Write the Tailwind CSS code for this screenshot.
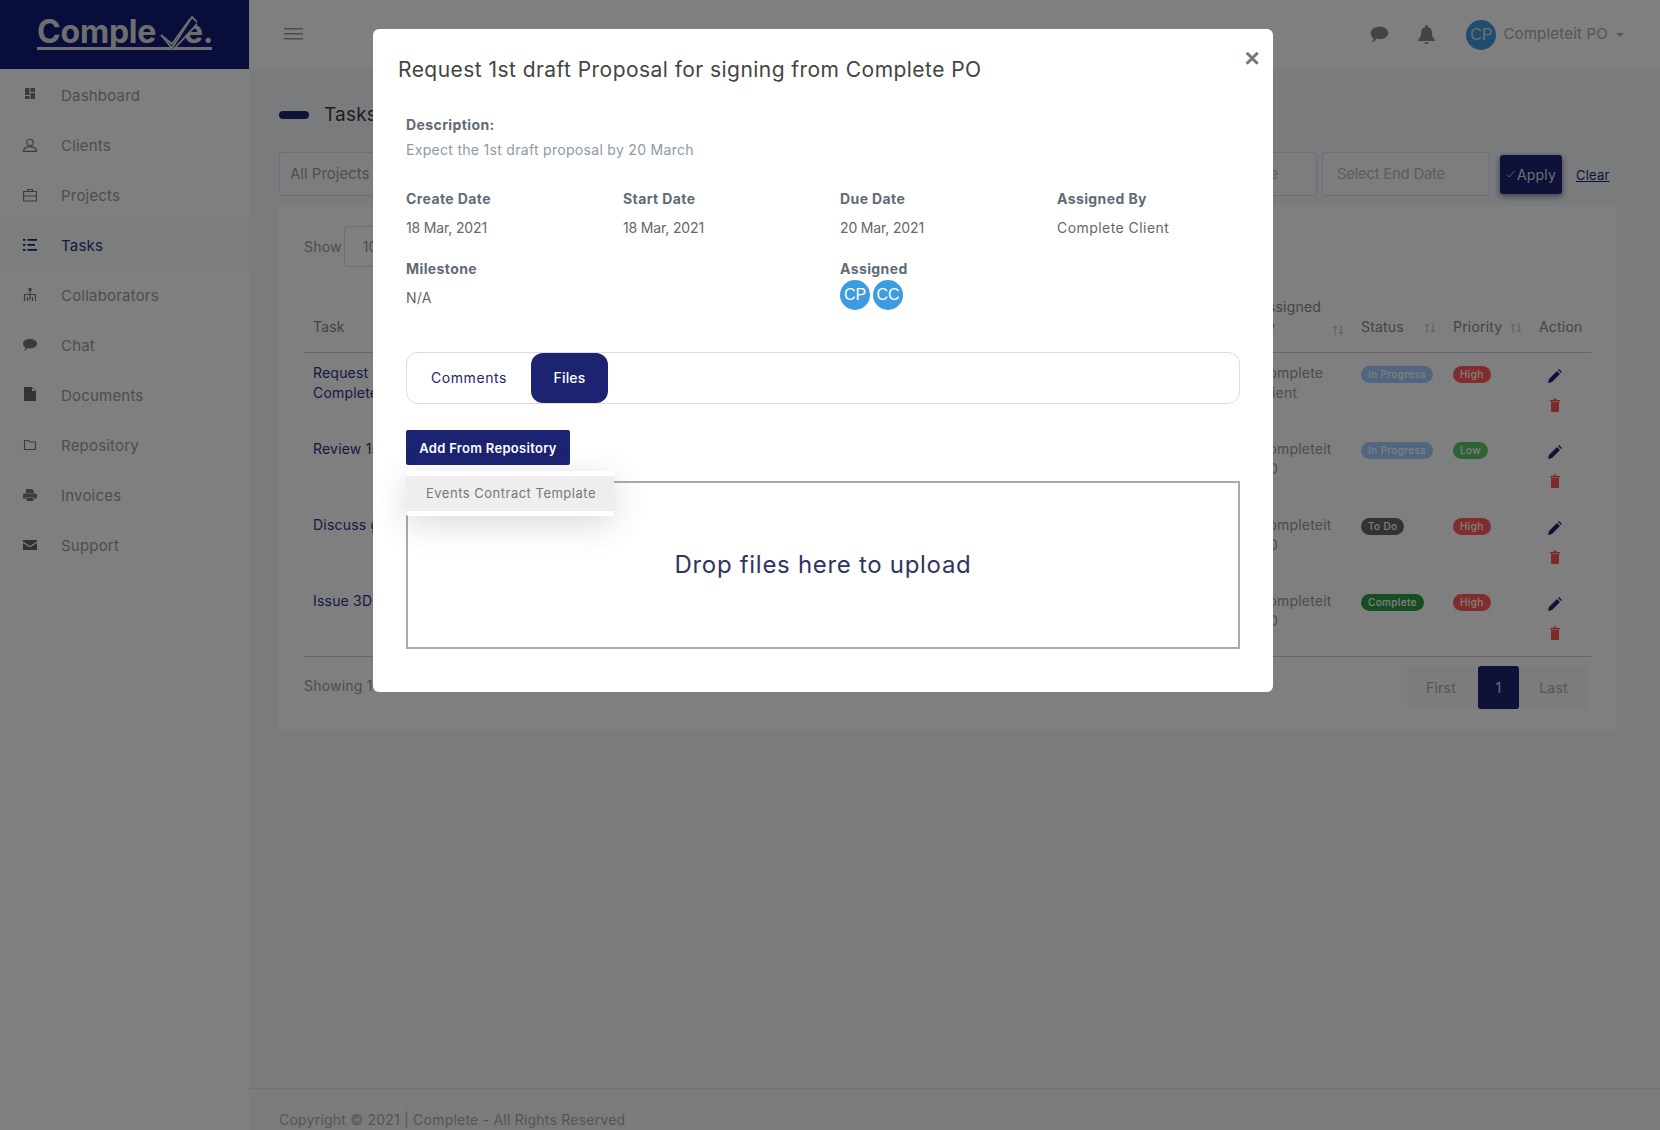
<!DOCTYPE html>
<html lang="en">
<head>
<meta charset="UTF-8">
<title>Tasks - Complete</title>
<script src="https://cdn.jsdelivr.net/npm/@tailwindcss/browser@4"></script>
</head>
<body class="font-['Inter',sans-serif] tracking-[0.2px] text-[14px] text-[#333] bg-[#f4f6f8] overflow-hidden">
<div class="flex h-[1130px] w-[1660px]">
  <!-- sidebar -->
  <aside class="w-[249px] shrink-0 bg-white">
    <div class="h-[69px] bg-[#111a78] flex items-center pl-[37px]">
      <div class="relative w-[175px] h-[33px] mt-[-3px] border-b-[3px] border-[#ddd] text-[#ddd] font-bold text-[32px] leading-[30px] tracking-[-0.2px] flex">
        <span>Comple</span>
        <span class="absolute left-[147px]">e.</span>
        <svg class="absolute left-[122px] top-[-3px] w-[38px] h-[38px]" viewBox="0 0 38 38" fill="#111a78" stroke="#ddd" stroke-width="1.8"><path d="M2 21l11 13L33 3l6 6-25 27"/><path d="M2 21l11 9L31 5" fill="none"/></svg>
      </div>
    </div>
    <nav class="text-[15px] text-[#9c9c9c] pt-[2px]">
      <a class="flex items-center h-[50px] pl-[23px] gap-[24px]"><svg class="w-[14px] h-[14px] mb-[4px]" viewBox="0 0 14 14" fill="#777"><path d="M2 1h4.500v7H2zM7.500 1H12v4H7.500zM7.500 6H12v6H7.500zM2 9h4.500v3H2z"/></svg>Dashboard</a>
      <a class="flex items-center h-[50px] pl-[23px] gap-[24px]"><svg class="w-[14px] h-[14px] mb-[2px]" viewBox="0 0 14 14" fill="none" stroke="#777" stroke-width="1.1"><circle cx="7" cy="4.500" r="3.200"/><path d="M.6 13.400c0-2.500 2-4 4-4.500h4.800c2 .5 4 2 4 4.500z"/></svg>Clients</a>
      <a class="flex items-center h-[50px] pl-[23px] gap-[24px]"><svg class="w-[14px] h-[14px] mb-[2px]" viewBox="0 0 14 14" fill="none" stroke="#777" stroke-width="1.1"><path d="M.6 3.500h12.800v9.500H.6zM4.500 3.500V1.500h5v2M.6 8h12.800M6 8h2"/></svg>Projects</a>
      <a class="flex items-center h-[50px] pl-[23px] gap-[24px] bg-[#f8fafa] text-[#2a3488]"><svg class="w-[14px] h-[14px] mb-[2px]" viewBox="0 0 14 14" fill="#1c2472"><path d="M0 1h2.500v1.800H0zM4.500 1H14v1.800H4.500zM0 6h2.500v1.800H0zM4.500 6H12v1.800H4.500zM0 11h2.500v1.800H0zM4.500 11H14v1.800H4.500z"/></svg>Tasks</a>
      <a class="flex items-center h-[50px] pl-[23px] gap-[24px]"><svg class="w-[14px] h-[14px] mb-[2px]" viewBox="0 0 14 14" fill="none" stroke="#777" stroke-width="1.2"><circle cx="7" cy="1.500" r="1.100" fill="#777"/><path d="M7 2v10M1.500 13V6.500h11V13M4.500 13V9M9.500 13V9"/></svg>Collaborators</a>
      <a class="flex items-center h-[50px] pl-[23px] gap-[24px]"><svg class="w-[14px] h-[14px] mb-[2px]" viewBox="0 0 14 14" fill="#777"><path d="M7 1c3.800 0 7 2 7 4.700s-3.200 4.700-7 4.700c-.8 0-1.500-.1-2.200-.3C3.800 11.300 2.500 12.500 1 13c.8-.8 1.400-2 1.500-3.500C1 8.600 0 7.300 0 5.700 0 3 3.200 1 7 1z"/></svg>Chat</a>
      <a class="flex items-center h-[50px] pl-[23px] gap-[24px]"><svg class="w-[14px] h-[14px] mb-[4px]" viewBox="0 0 14 14" fill="#666"><path d="M1 0h8l4 4v10H1zM9 .8V4h3.200z"/></svg>Documents</a>
      <a class="flex items-center h-[50px] pl-[23px] gap-[24px]"><svg class="w-[14px] h-[14px] mb-[3px]" viewBox="0 0 14 14" fill="none" stroke="#777" stroke-width="1.100"><path d="M1.500 2.500h4l1.500 1.500h5.500v7.500h-11z"/></svg>Repository</a>
      <a class="flex items-center h-[50px] pl-[23px] gap-[24px]"><svg class="w-[14px] h-[14px] mb-[2px]" viewBox="0 0 14 14" fill="#777"><path d="M3 1h6l2 2v2H3zM1.500 5.500h11c.8 0 1.500.7 1.500 1.500v3.500h-3V9H3v1.500H0V7c0-.8.700-1.500 1.500-1.500zM3.500 9.500h7V13h-7z"/></svg>Invoices</a>
      <a class="flex items-center h-[50px] pl-[23px] gap-[24px]"><svg class="w-[14px] h-[14px] mb-[3px]" viewBox="0 0 14 14" fill="#666"><path d="M0 2h14v1.500L7 8 0 3.500zM0 5l7 4.500L14 5v7H0z"/></svg>Support</a>
    </nav>
  </aside>

  <!-- main column -->
  <div class="flex-1 flex flex-col min-w-0">
    <header class="h-[69px] bg-white flex items-center pl-[35px] pr-[36px] shrink-0">
      <svg class="w-[19px] h-[14px] mb-[2px]" viewBox="0 0 19 14" fill="#999"><path d="M0 1h19v1.500H0zM0 6h19v1.500H0zM0 11h19v1.500H0z"/></svg>
      <div class="ml-auto flex items-center">
        <svg class="w-[19px] h-[18px]" viewBox="0 0 14 13" fill="#888"><path d="M7 .5c3.600 0 6.500 2 6.500 4.500S10.600 9.500 7 9.500c-.8 0-1.500-.1-2.200-.3C3.800 10.300 2.500 11.500 1 12c.8-.8 1.400-1.800 1.500-3C1.300 8 .5 6.500.5 5 .5 2.500 3.400.5 7 .5z"/></svg>
        <svg class="w-[17px] h-[19px] ml-[29px]" viewBox="0 0 14 16" fill="#888"><path d="M7 0c.6 0 1 .4 1 1v.6c2.300.4 3.500 2.300 3.500 4.500 0 3.500 1 4.700 2.500 6.400v1H0v-1c1.500-1.700 2.500-2.900 2.500-6.400C2.500 3.900 3.700 2 6 1.600V1c0-.6.400-1 1-1zM5 14.500h4c0 1-1 1.500-2 1.500s-2-.5-2-1.500z"/></svg>
        <div class="ml-[31px] w-[30px] h-[30px] rounded-full bg-[#3d9be0] text-[#ddd] flex items-center justify-center font-['Liberation_Sans',sans-serif] text-[16px] tracking-normal">CP</div>
        <span class="ml-[7px] text-[#aaa] text-[15px]">Completeit PO</span>
        <span class="ml-[8px] border-x-[4px] border-x-transparent border-t-[4px] border-t-[#aaa]"></span>
      </div>
    </header>

    <main class="flex-1 px-[30px]">
      <div class="flex items-center pt-[9px] h-[83px]">
        <span class="w-[30px] h-[8px] rounded-full bg-[#1c2472]"></span>
        <h1 class="ml-[15px] text-[19px] text-[#3c3c3c]">Tasks</h1>
      </div>
      <div class="flex items-center mr-[20px]">
        <div class="w-[400px] h-[44px] bg-[#fafbff] border border-[#dde] rounded-[3px] pl-[10px] flex items-center text-[15px] tracking-[0px] text-[#a0a0a0]">All Projects</div>
        <div class="ml-auto flex items-center">
          <div class="w-[168px] h-[44px] bg-[#fafbff] border border-[#dde] rounded-[3px] flex items-center justify-end pr-[38px] text-[15px] tracking-[-0.3px] text-[#bbb]">Select Start Date</div>
          <div class="ml-[5px] w-[168px] h-[44px] bg-[#fafbff] border border-[#dde] rounded-[3px] pl-[14px] flex items-center text-[15px] tracking-[-0.3px] text-[#bbb]">Select End Date</div>
          <button class="ml-[10px] w-[62px] h-[39px] bg-[#1c2472] text-[#ddd] rounded-[3px] text-[14px] flex items-center justify-center gap-[2px] shadow-[0_2px_6px_rgba(28,36,114,0.6)]"><svg class="w-[9px] h-[8px]" viewBox="0 0 9 8" fill="none" stroke="#bbb" stroke-width="1"><path d="M.5 4.500l2.500 2.500L8.500 1"/></svg>Apply</button>
          <a class="ml-[14px] w-[34px] text-[#1c2472] underline text-[13px] mt-[3px]">Clear</a>
        </div>
      </div>

      <section class="mt-[10px] bg-white rounded-[3px] h-[524px] pt-[20px] px-[25px] w-[1337px]">
        <div class="flex items-center text-[14px] text-[#999] h-[41px]">
          <span>Show</span>
          <div class="ml-[2px] w-[70px] h-[41px] border border-[#dde] rounded-[3px] flex items-center pl-[18px]">10</div>
        </div>
        <div class="grid grid-cols-[954px_103px_92px_86px_52px] h-[86px] border-b border-[#ccc] text-[14px] text-[#888] items-end pb-[15px]">
          <div class="pl-[9px]">Task</div>
          <div class="leading-[20px] relative">Assigned<br>By
            <svg class="absolute right-[17px] bottom-[1px] w-[12px] h-[12px]" viewBox="0 0 12 12" fill="none" stroke="#bbb" stroke-width="1"><path d="M3 11V2M1 4l2-2 2 2M9 1v9M7 8l2 2 2-2"/></svg>
          </div>
          <div class="flex items-center">Status<svg class="ml-[20px] mt-[3px] w-[12px] h-[12px]" viewBox="0 0 12 12" fill="none" stroke="#bbb" stroke-width="1"><path d="M3 11V2M1 4l2-2 2 2M9 1v9M7 8l2 2 2-2"/></svg></div>
          <div class="flex items-center">Priority<svg class="ml-[8px] mt-[3px] w-[12px] h-[12px]" viewBox="0 0 12 12" fill="none" stroke="#bbb" stroke-width="1"><path d="M3 11V2M1 4l2-2 2 2M9 1v9M7 8l2 2 2-2"/></svg></div>
          <div>Action</div>
        </div>

        <div class="grid grid-cols-[954px_103px_92px_86px_52px] h-[76px] pt-[10px] leading-[20px] text-[14px] text-[#999]">
          <div class="pl-[9px] text-[#2a3488]">Request 1st draft Proposal for signing from<br>Complete PO</div>
          <div>Complete<br>Client</div>
          <div><span class="inline-block h-[17px] leading-[17px] px-[7px] rounded-full bg-[#a0ceff] text-white text-[10px] font-medium tracking-[0.35px]">In Progress</span></div>
          <div><span class="inline-block h-[17px] leading-[17px] px-[7px] rounded-full bg-[#ff5a5a] text-white text-[10px] font-medium tracking-[0.35px]">High</span></div>
          <div class="pl-[9px] flex flex-col gap-[15px] pt-[6px]">
            <svg class="w-[14px] h-[14px]" viewBox="0 0 14 14" fill="#1c2472"><path d="M0 14l1-4 8-8 3 3-8 8zM10 1l1-1 3 3-1 1z"/></svg>
            <svg class="w-[10px] h-[14px] ml-[2px]" viewBox="0 0 10 14" fill="#f55"><path d="M0 2h10v1.500H0zM3.500 .5h3V2h-3zM1 4h8v9a1 1 0 0 1-1 1H2a1 1 0 0 1-1-1z"/></svg>
          </div>
        </div>
        <div class="grid grid-cols-[954px_103px_92px_86px_52px] h-[76px] pt-[10px] leading-[20px] text-[14px] text-[#999]">
          <div class="pl-[9px] text-[#2a3488]">Review 1st draft Proposal</div>
          <div>Completeit<br>PO</div>
          <div><span class="inline-block h-[17px] leading-[17px] px-[7px] rounded-full bg-[#a0ceff] text-white text-[10px] font-medium tracking-[0.35px]">In Progress</span></div>
          <div><span class="inline-block h-[17px] leading-[17px] px-[7px] rounded-full bg-[#5cc96a] text-white text-[10px] font-medium tracking-[0.35px]">Low</span></div>
          <div class="pl-[9px] flex flex-col gap-[15px] pt-[6px]">
            <svg class="w-[14px] h-[14px]" viewBox="0 0 14 14" fill="#1c2472"><path d="M0 14l1-4 8-8 3 3-8 8zM10 1l1-1 3 3-1 1z"/></svg>
            <svg class="w-[10px] h-[14px] ml-[2px]" viewBox="0 0 10 14" fill="#f55"><path d="M0 2h10v1.500H0zM3.500 .5h3V2h-3zM1 4h8v9a1 1 0 0 1-1 1H2a1 1 0 0 1-1-1z"/></svg>
          </div>
        </div>
        <div class="grid grid-cols-[954px_103px_92px_86px_52px] h-[76px] pt-[10px] leading-[20px] text-[14px] text-[#999]">
          <div class="pl-[9px] text-[#2a3488]">Discuss general terms</div>
          <div>Completeit<br>PO</div>
          <div><span class="inline-block h-[17px] leading-[17px] px-[7px] rounded-full bg-[#666] text-white text-[10px] font-medium tracking-[0.35px]">To Do</span></div>
          <div><span class="inline-block h-[17px] leading-[17px] px-[7px] rounded-full bg-[#ff5a5a] text-white text-[10px] font-medium tracking-[0.35px]">High</span></div>
          <div class="pl-[9px] flex flex-col gap-[15px] pt-[6px]">
            <svg class="w-[14px] h-[14px]" viewBox="0 0 14 14" fill="#1c2472"><path d="M0 14l1-4 8-8 3 3-8 8zM10 1l1-1 3 3-1 1z"/></svg>
            <svg class="w-[10px] h-[14px] ml-[2px]" viewBox="0 0 10 14" fill="#f55"><path d="M0 2h10v1.500H0zM3.500 .5h3V2h-3zM1 4h8v9a1 1 0 0 1-1 1H2a1 1 0 0 1-1-1z"/></svg>
          </div>
        </div>
        <div class="grid grid-cols-[954px_103px_92px_86px_52px] h-[76px] pt-[10px] leading-[20px] text-[14px] text-[#999] border-b border-[#ccc]">
          <div class="pl-[9px] text-[#2a3488]">Issue 3D plans</div>
          <div>Completeit<br>PO</div>
          <div><span class="inline-block h-[17px] leading-[17px] px-[7px] rounded-full bg-[#2f9a45] text-white text-[10px] font-medium tracking-[0.35px]">Complete</span></div>
          <div><span class="inline-block h-[17px] leading-[17px] px-[7px] rounded-full bg-[#ff5a5a] text-white text-[10px] font-medium tracking-[0.35px]">High</span></div>
          <div class="pl-[9px] flex flex-col gap-[15px] pt-[6px]">
            <svg class="w-[14px] h-[14px]" viewBox="0 0 14 14" fill="#1c2472"><path d="M0 14l1-4 8-8 3 3-8 8zM10 1l1-1 3 3-1 1z"/></svg>
            <svg class="w-[10px] h-[14px] ml-[2px]" viewBox="0 0 10 14" fill="#f55"><path d="M0 2h10v1.500H0zM3.500 .5h3V2h-3zM1 4h8v9a1 1 0 0 1-1 1H2a1 1 0 0 1-1-1z"/></svg>
          </div>
        </div>
        <div class="flex items-center h-[43px] mt-[9px] text-[14px] text-[#999]">
          <span class="mb-[4px]">Showing 1 to 4 of 4 entries</span>
          <div class="ml-auto mr-[3px] flex items-center h-[43px] bg-[#f8f9fb] text-[#aaa]">
            <span class="w-[71px] pr-[3px] text-center">First</span>
            <span class="w-[41px] h-[43px] rounded-[3px] bg-[#1c2472] text-[#ddd] flex items-center justify-center">1</span>
            <span class="w-[69px] text-center">Last</span>
          </div>
        </div>
      </section>
    </main>

    <footer class="h-[42px] border-t border-[#e4e7ea] px-[30px] pt-[21px] text-[14px] tracking-[0.22px] text-[#aaa] shrink-0 leading-[20px]">Copyright © 2021 | Complete - All Rights Reserved</footer>
  </div>
</div>

<!-- backdrop -->
<div class="fixed inset-0 bg-black/50"></div>

<!-- modal -->
<div class="fixed left-[373px] top-[29px] w-[900px] h-[663px] bg-white rounded-[6px] pt-[27px]">
  <button class="absolute right-[13px] top-[16px] text-[#777] text-[26px] leading-[26px] font-bold font-['Liberation_Sans',sans-serif]">×</button>
  <h2 class="pl-[25px] text-[21px] leading-[28px] tracking-[0.45px] text-[#444]">Request 1st draft Proposal for signing from Complete PO</h2>
  <div class="px-[33px] pt-[31px]">
    <div class="text-[14px] leading-[20px] font-bold tracking-[0.4px] text-[#5f6b76]">Description:</div>
    <div class="mt-[5px] text-[14px] leading-[20px] tracking-[0.3px] text-[#8a9aa6]">Expect the 1st draft proposal by 20 March</div>
    <div class="grid grid-cols-[217px_217px_217px_1fr] mt-[29px] text-[14px] leading-[20px]">
      <div>
        <div class="font-bold tracking-[0.4px] text-[#5f6b76]">Create Date</div>
        <div class="mt-[9px] tracking-[-0.15px] text-[#666]">18 Mar, 2021</div>
      </div>
      <div>
        <div class="font-bold tracking-[0.4px] text-[#5f6b76]">Start Date</div>
        <div class="mt-[9px] tracking-[-0.15px] text-[#666]">18 Mar, 2021</div>
      </div>
      <div>
        <div class="font-bold tracking-[0.4px] text-[#5f6b76]">Due Date</div>
        <div class="mt-[9px] tracking-[-0.15px] text-[#666]">20 Mar, 2021</div>
      </div>
      <div>
        <div class="font-bold tracking-[0.4px] text-[#5f6b76]">Assigned By</div>
        <div class="mt-[9px] tracking-[0.45px] text-[#666]">Complete Client</div>
      </div>
      <div class="mt-[21px]">
        <div class="font-bold tracking-[0.4px] text-[#5f6b76]">Milestone</div>
        <div class="mt-[9px] text-[#666]">N/A</div>
      </div>
      <div></div>
      <div class="mt-[21px]">
        <div class="font-bold tracking-[0.4px] text-[#5f6b76]">Assigned</div>
        <div class="flex gap-[3px] mt-[1px] font-['Liberation_Sans',sans-serif] text-[16px] tracking-normal text-white">
          <span class="w-[30px] h-[30px] rounded-full bg-[#3d9be0] flex items-center justify-center">CP</span>
          <span class="w-[30px] h-[30px] rounded-full bg-[#3d9be0] flex items-center justify-center">CC</span>
        </div>
      </div>
    </div>

    <div class="mt-[42px] h-[52px] w-[834px] border border-[#ddd] rounded-[12px] flex text-[14px]">
      <a class="w-[124px] flex items-center justify-center pb-[1px] tracking-[0.6px] text-[#1c2472]">Comments</a>
      <a class="w-[77px] flex items-center justify-center pb-[1px] bg-[#1c2472] text-white rounded-[12px] font-medium">Files</a>
    </div>

    <div class="relative mt-[26px]">
      <button class="w-[164px] h-[35px] pt-[2px] bg-[#1c2472] text-white rounded-[2px] text-[13px] font-semibold tracking-[0.3px]">Add From Repository</button>
      <div class="mt-[16px] w-[834px] h-[168px] border-2 border-[#aaa] flex items-center justify-center text-[24px] tracking-[0.7px] text-[#2f3560]">Drop files here to upload</div>
      <div class="absolute left-0 top-[41px] w-[208px] py-[5px] bg-white rounded-[3px] shadow-[0_8px_32px_rgba(60,70,90,0.2)]">
        <div class="h-[35px] bg-[#eee] pl-[20px] flex items-center text-[13px] tracking-[0.5px] text-[#777]">Events Contract Template</div>
      </div>
    </div>
  </div>
</div>
</body>
</html>
